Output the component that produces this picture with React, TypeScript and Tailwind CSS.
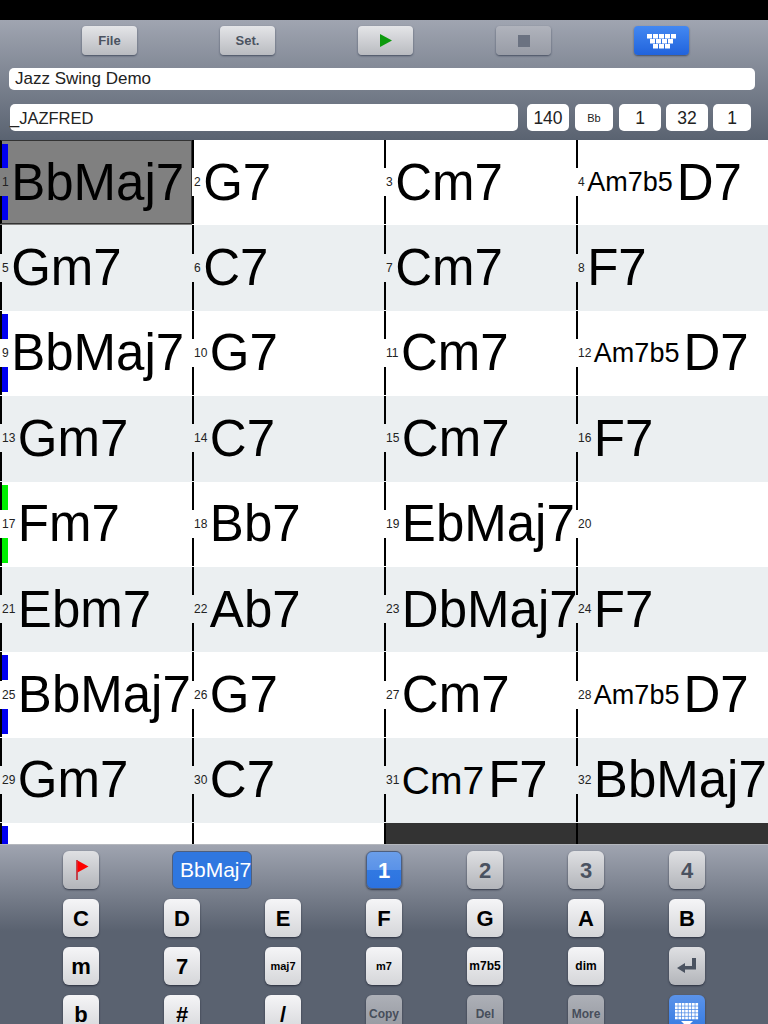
const font = "font-['Liberation_Sans',Arial,sans-serif]"

type Cell = { n: number; small?: string; smallSize?: string; chord?: string }

const cells: Cell[] = [
  { n: 1, chord: 'BbMaj7' },
  { n: 2, chord: 'G7' },
  { n: 3, chord: 'Cm7' },
  { n: 4, small: 'Am7b5', chord: 'D7' },
  { n: 5, chord: 'Gm7' },
  { n: 6, chord: 'C7' },
  { n: 7, chord: 'Cm7' },
  { n: 8, chord: 'F7' },
  { n: 9, chord: 'BbMaj7' },
  { n: 10, chord: 'G7' },
  { n: 11, chord: 'Cm7' },
  { n: 12, small: 'Am7b5', chord: 'D7' },
  { n: 13, chord: 'Gm7' },
  { n: 14, chord: 'C7' },
  { n: 15, chord: 'Cm7' },
  { n: 16, chord: 'F7' },
  { n: 17, chord: 'Fm7' },
  { n: 18, chord: 'Bb7' },
  { n: 19, chord: 'EbMaj7' },
  { n: 20 },
  { n: 21, chord: 'Ebm7' },
  { n: 22, chord: 'Ab7' },
  { n: 23, chord: 'DbMaj7' },
  { n: 24, chord: 'F7' },
  { n: 25, chord: 'BbMaj7' },
  { n: 26, chord: 'G7' },
  { n: 27, chord: 'Cm7' },
  { n: 28, small: 'Am7b5', chord: 'D7' },
  { n: 29, chord: 'Gm7' },
  { n: 30, chord: 'C7' },
  { n: 31, small: 'Cm7', smallSize: 'text-[39px]', chord: 'F7' },
  { n: 32, chord: 'BbMaj7' },
]

const ToolButton = ({ children, kind = 'light' }: { children: React.ReactNode; kind?: 'light' | 'dim' | 'blue' }) => {
  const look =
    kind === 'blue'
      ? 'bg-gradient-to-b from-[#4388f2] to-[#2163dc]'
      : kind === 'dim'
        ? 'bg-gradient-to-b from-[#b0b3bc] to-[#989ca6]'
        : 'bg-gradient-to-b from-[#e4e5e8] to-[#b9bbc0]'
  return (
    <div className={`flex h-[29px] w-[55px] items-center justify-center rounded-[4px] text-[13px] font-bold text-[#4b5361] shadow-[0_1px_2px_rgba(40,50,70,0.7)] ${look}`}>
      {children}
    </div>
  )
}

const Key = ({ children, kind = 'white', size = 'text-[22px]' }: { children: React.ReactNode; kind?: 'white' | 'gray' | 'dim' | 'blue' | 'split'; size?: string }) => {
  const look = {
    white: 'bg-gradient-to-b from-[#f5f5f7] to-[#d5d6d9] text-black',
    gray: 'bg-gradient-to-b from-[#dfe0e3] to-[#b3b5ba] text-[#4a5260]',
    dim: 'bg-gradient-to-b from-[#adb0b7] to-[#93969e] text-[#474e5b]',
    blue: 'bg-gradient-to-b from-[#5b93e9] to-[#3078e2] text-white',
    split: 'border border-[#4e5f7e] bg-[linear-gradient(to_bottom,#6a9eea,#5a92e8_50%,#3179e2_50%,#2c72e0)] text-white',
  }[kind]
  return (
    <div className={`flex h-[38px] w-[36px] items-center justify-center rounded-[6px] font-bold shadow-[0_1px_2px_rgba(30,35,50,0.8)] ${size} ${look}`}>
      {children}
    </div>
  )
}

const Field = ({ children, w, small }: { children: React.ReactNode; w: string; small?: boolean }) => (
  <div className={`flex h-[27px] items-center justify-center rounded-[5px] bg-white pt-[1px] text-[#222] ${small ? 'text-[11px]' : 'text-[17.5px]'} ${w}`}>
    {children}
  </div>
)

const Marks = ({ color }: { color: string }) => (
  <>
    <div className={`absolute left-0 top-[3px] h-[25px] w-[6px] ${color}`} />
    <div className={`absolute bottom-[3px] left-0 h-[25px] w-[6px] ${color}`} />
  </>
)

const markColor = (i: number) => {
  if (i === 16) return 'bg-[#00f000]'
  if (i === 0 || i === 8 || i === 24) return 'bg-[#0000f0]'
  return ''
}

const KeyboardIcon = () => (
  <svg width="29" height="15" viewBox="0 0 29 15" fill="#fff" className="mt-[1px]">
    {[0, 6, 12, 18, 24].map((x) => (
      <rect key={x} x={x} y="0" width="5" height="4.5" />
    ))}
    {[3, 9, 15, 21].map((x) => (
      <rect key={x} x={x} y="5" width="5" height="4.5" />
    ))}
    {[6, 12, 18].map((x) => (
      <rect key={x} x={x} y="10" width="5" height="4.5" />
    ))}
  </svg>
)

const GridKeyIcon = () => (
  <svg width="24" height="29" viewBox="0 0 24 29" fill="#fff" className="mt-[6px]">
    {[0, 1, 2, 3, 4].map((r) =>
      [0, 1, 2, 3, 4, 5, 6].map((c) => <rect key={`${r}-${c}`} x={c * 3.4} y={r * 3.4} width="2.7" height="2.7" />),
    )}
    <path d="M6 18h12l-6 6z" />
  </svg>
)

const EnterIcon = () => (
  <svg width="20" height="16" viewBox="0 0 20 16" fill="#4a5260">
    <path d="M15 0h4v11.5H8V15L0 10l8-5v3h7z" />
  </svg>
)

export default function App() {
  return (
    <div className={`h-[1024px] w-[768px] overflow-hidden bg-black ${font}`}>
      <div className="h-[20px] bg-black" />

      {/* top toolbar */}
      <div className="h-[120px] bg-gradient-to-b from-[#a0a5b1] to-[#5a6371] pt-[6px]">
        <div className="flex gap-[83px] pl-[82px]">
          <ToolButton>File</ToolButton>
          <ToolButton>Set.</ToolButton>
          <ToolButton>
            <svg width="12" height="13" viewBox="0 0 12 13">
              <path d="M0 0l12 6.5L0 13z" fill="#0d9a0d" />
            </svg>
          </ToolButton>
          <ToolButton kind="dim">
            <div className="h-[12px] w-[12px] bg-[#6b7281]" />
          </ToolButton>
          <ToolButton kind="blue">
            <KeyboardIcon />
          </ToolButton>
        </div>
        <div className="ml-[9px] mt-[13px] flex h-[22px] w-[746px] items-center rounded-[5px] bg-white pl-[6px] text-[17px] text-[#222]">
          Jazz Swing Demo
        </div>
        <div className="ml-[10px] mt-[14px] flex">
          <div className="flex h-[27px] w-[508px] items-center rounded-[5px] bg-white pt-[1px] text-[16.5px] text-[#222]">_JAZFRED</div>
          <div className="ml-[9px] flex gap-[6px]">
            <Field w="w-[42px]">140</Field>
            <Field w="w-[38px]" small>Bb</Field>
            <Field w="w-[42px]">1</Field>
          </div>
          <div className="ml-[5px] flex gap-[5px]">
            <Field w="w-[42px]">32</Field>
            <Field w="w-[38px]">1</Field>
          </div>
        </div>
      </div>

      {/* chord grid */}
      <div className="grid h-[704px] grid-cols-4 auto-rows-[85.4px] overflow-hidden bg-white text-black">
        {cells.map((cell, i) => {
          const shaded = Math.floor(i / 4) % 2 === 1
          const selected = i === 0
          const bg = selected ? 'bg-[#808080]' : shaded ? 'bg-[#ebeff1]' : 'bg-white'
          return (
            <div key={cell.n} className={bg}>
              <div className={`relative flex h-[calc(100%-1px)] items-center whitespace-nowrap border-l-2 border-black ${selected ? 'border-y border-r border-y-[#333] border-r-[#333]' : ''}`}>
                {markColor(i) && <Marks color={markColor(i)} />}
                <span className={`relative z-10 -ml-[2px] mr-[2.5px] flex h-[28px] items-center pl-[2px] text-[12px] leading-none text-[#222] ${bg}`}>
                  {cell.n}
                </span>
                {cell.small && <span className={`mr-[4px] pt-[1px] leading-none ${cell.smallSize ?? 'text-[27px]'}`}>{cell.small}</span>}
                {cell.chord && <span className="relative z-20 text-[51px] leading-none">{cell.chord}</span>}
              </div>
            </div>
          )
        })}
        <div className="bg-white">
          <div className="relative h-full border-l-2 border-black">
            <div className="absolute left-0 top-[3px] h-[25px] w-[6px] bg-[#0000f0]" />
          </div>
        </div>
        <div className="bg-white">
          <div className="h-full border-l-2 border-black" />
        </div>
        <div className="bg-[#333]">
          <div className="h-full border-l-2 border-black" />
        </div>
        <div className="bg-[#333]">
          <div className="h-full border-l-2 border-black" />
        </div>
      </div>

      {/* chord keypad */}
      <div className="h-[180px] border-t border-[#b4b7bd] bg-[linear-gradient(to_bottom,#9fa4b0_0px,#5a6270_86px,#5a6270_100%)] pt-[6px]">
        <div className="grid grid-cols-[repeat(7,36px)] gap-x-[65px] gap-y-[10px] pl-[63px]">
          <Key kind="gray">
            <svg width="13" height="22" viewBox="0 0 13 22" className="ml-[2px]">
              <path d="M1 1v20" stroke="#c2222e" strokeWidth="1.6" />
              <path d="M1.5 1.5l11 6-11 6z" fill="#f00" />
            </svg>
          </Key>
          <div className="col-span-2 ml-[8px] flex h-[38px] w-[80px] items-center overflow-hidden rounded-[6px] border border-[#4e5f7e] bg-[#2f77e0] pl-[7px] text-[21px] text-white">
            BbMaj7
          </div>
          <Key kind="split">1</Key>
          <Key kind="gray">2</Key>
          <Key kind="gray">3</Key>
          <Key kind="gray">4</Key>

          <Key>C</Key>
          <Key>D</Key>
          <Key>E</Key>
          <Key>F</Key>
          <Key>G</Key>
          <Key>A</Key>
          <Key>B</Key>

          <Key>m</Key>
          <Key>7</Key>
          <Key size="text-[11px]">maj7</Key>
          <Key size="text-[11px]">m7</Key>
          <Key size="text-[12px]">m7b5</Key>
          <Key size="text-[12px]">dim</Key>
          <Key kind="gray">
            <EnterIcon />
          </Key>

          <Key>b</Key>
          <Key>#</Key>
          <Key>/</Key>
          <Key kind="dim" size="text-[12px]">Copy</Key>
          <Key kind="dim" size="text-[12px]">Del</Key>
          <Key kind="dim" size="text-[12px]">More</Key>
          <Key kind="blue">
            <GridKeyIcon />
          </Key>
        </div>
      </div>
    </div>
  )
}
